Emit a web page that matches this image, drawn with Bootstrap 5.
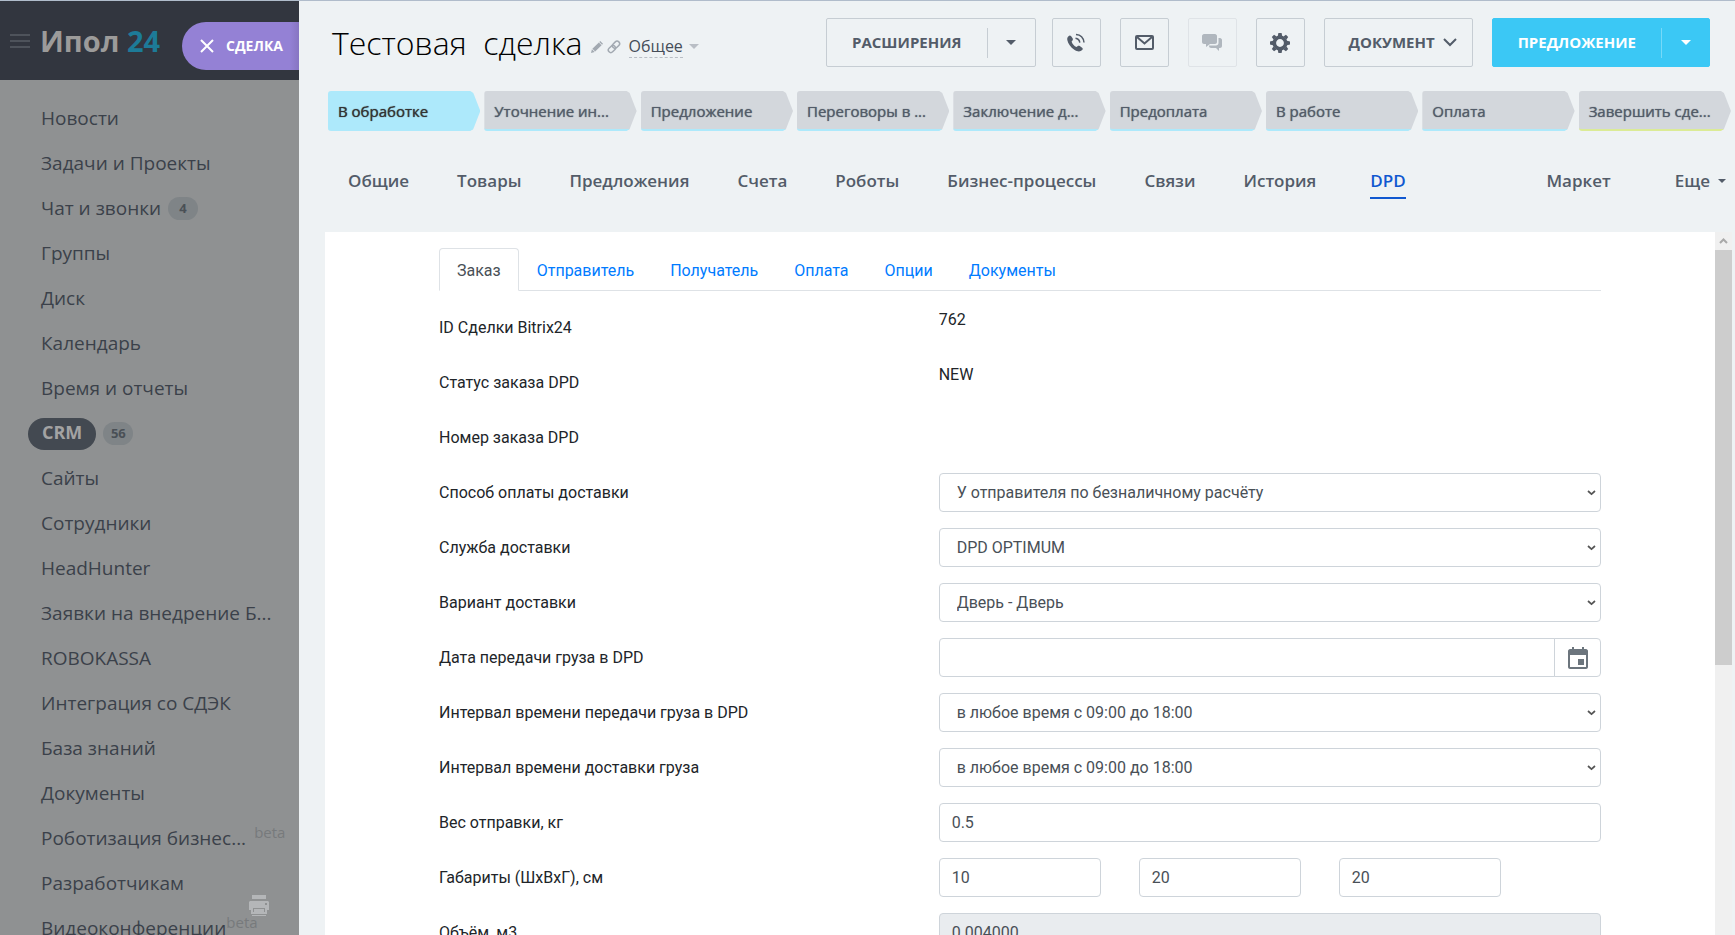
<!DOCTYPE html>
<html lang="ru">
<head>
<meta charset="utf-8">
<meta name="viewport" content="width=device-width, initial-scale=1">
<title>Тестовая сделка</title>
<link href="https://cdn.jsdelivr.net/npm/bootstrap@5.3.0/dist/css/bootstrap.min.css" rel="stylesheet">
<style>
body { font-family: "Open Sans", sans-serif; background: #eef2f4; color: #525c69; }
a { text-decoration: none; color: inherit; }
.app { height: 100vh; border-top: 1px solid #b0bccb; }

/* left menu */
.side { width: 299px; background: #8f9192; }
.side-head { height: 79px; background: #32363f; padding-left: 10px; }
.brand { font-size: 29px; line-height: 40px; font-weight: 700; color: #9c9b9a; margin-left: 10px; }
.brand span { color: #1d7b98; }
.burger { width: 20px; height: 17px; border: 0; padding: 0; background: none; margin-top: 1px; }
.slider-label { width: 117px; height: 48px; border: 0; border-radius: 24px 0 0 24px; background: linear-gradient(90deg, #9481d5 92%, #8775c2); color: #fff; font-size: 14px; font-weight: 700; padding: 0 0 0 18px; gap: 12px; margin-top: 10px; }
.menu { padding: 16px 0 0 41px; }
.menu li { height: 45px; font-size: 19px; color: #3b414a; white-space: nowrap; }
.pill { height: 23px; width: 30px; border-radius: 12px; background: #7f8487; color: #4a5056; font-size: 13px; font-weight: 700; margin-left: 7px; }
.menu .current { height: 32px; border-radius: 16px; background: #434951; color: #a3a3a3; font-size: 18px; font-weight: 700; line-height: 28px; padding: 0 14px; margin-left: -13px; }
.beta { font-size: 15px; color: #777a7c; margin-bottom: 12px; }
.print { right: 30px; bottom: 18px; border: 0; padding: 0; background: none; line-height: 0; }

/* deal header */
.deal-head { padding: 17px 25px 0 33px; }
.deal-title { font-size: 32px; line-height: 48px; font-weight: 300; color: #000; margin: 0; }
.icon-plain { border: 0; padding: 0; background: none; line-height: 0; }
.category { font-size: 16px; line-height: 22px; color: #454d58; border: 0; border-bottom: 1px dashed #b9bec5; padding: 0; background: none; margin-left: 8px; }
.tri { width: 0; height: 0; border: 5px solid transparent; border-top-color: currentColor; border-bottom: 0; }
.tri-pale { color: #b9bec5; margin-left: 6px; }
.tool { height: 49px; border: 1px solid #c6cdd3; border-radius: 2px; color: #535c69; background: none; font-size: 15px; font-weight: 700; padding: 0; display: flex; align-items: center; justify-content: center; }
.tool-square { width: 49px; }
.tool-square + .tool, .tool + .tool-split { margin-left: 19px; }
.tool:disabled { border-color: #dfe3e7; background: none; opacity: 1; }
.doc { padding: 0 15px 0 24px; }
.tool-split { padding-left: 25px; }
.tool-split .drop { border: 0; border-left: 1px solid #c6cdd3; background: none; color: inherit; height: 30px; width: 48px; padding: 0; display: flex; justify-content: center; align-items: center; }
.tool-split .act { border: 0; background: none; color: inherit; font-weight: inherit; padding: 0; margin-right: 25px; }
.tool-blue { background: #3bc8f5; border-color: #3bc8f5; color: #fff; }
.tool-blue .drop { border-left-color: #76d9f8; }

/* stage chevrons */
.stages { padding: 24px 4px 0 29px; gap: 4px; }
.stage { flex: 1 1 0; min-width: 0; height: 40px; border: 0; border-radius: 3px 0 0 3px; border-bottom: 2px solid #ade9fb; background: #d3d7dc; color: #535c69; font-size: 15px; text-align: left; padding: 2px 6px 0 10px; white-space: nowrap; overflow: hidden; text-shadow: 0 0 1px currentColor; line-height: 36px;
  clip-path: polygon(0 0, calc(100% - 10px) 0, calc(100% - 7px) 2px, 100% 50%, calc(100% - 7px) calc(100% - 2px), calc(100% - 10px) 100%, 0 100%); }
.stage.now { background: #ade9fb; color: #333; }
.stage.final { border-bottom-color: #dbeb96; }

/* section links */
.sections { padding: 38px 9px 0 49px; gap: 48px; font-size: 17px; line-height: 24px; font-weight: 600; }
.sections a { color: #535c69; padding-bottom: 4px; border-bottom: 2px solid transparent; white-space: nowrap; }
.sections .chosen { color: #1058d0; border-color: #1058d0; margin-left: 6px; }

/* order form */
.sheet { margin: 33px 3px 0 26px; background: #fff; min-height: 0; font-family: Roboto, sans-serif; font-size: 16px; color: #212529; }
.sheet-body { padding: 16px 114px 0; min-width: 0; }
.nav-tabs { --bs-nav-tabs-link-active-color: #495057; --bs-nav-link-color: #007bff; --bs-nav-tabs-border-radius: 4px; margin-bottom: 17px; }
.nav-tabs .nav-link { padding: 9px 17px 7px; line-height: 25px; }
.line { min-height: 39px; margin-bottom: 16px; }
.line-name { flex: 0 0 43%; line-height: 24px; padding-top: 8px; }
.form-control, .form-select { height: 39px; font-size: 16px; line-height: 24px; color: #495057; border-color: #ced4da; border-radius: 4px; }
.form-control { padding: 6px 12px; }
.form-select { padding: 6px 30px 6px 17px; background-size: 9px 6px; background-position: right 4px center;
  background-image: url("data:image/svg+xml,%3csvg xmlns='http://www.w3.org/2000/svg' viewBox='0 0 9 6'%3e%3cpath d='M1 1l3.500 3.200L8 1' fill='none' stroke='%23555' stroke-width='1.700'/%3e%3c/svg%3e"); }
.form-control:disabled { background: #e9ecef; }
.date-btn { width: 47px; flex: none; border: 1px solid #ced4da; border-radius: 4px; background: #fff; padding: 0; }
.sizes { gap: 38px; }
.sizes .form-control { width: 162px; }
.rail { width: 17px; background: #f0f0f0; }
.rail-up { height: 18px; }
.rail-thumb { height: 59%; background: #cdcdcd; }
</style>
</head>
<body class="overflow-hidden">
<div class="app d-flex overflow-hidden">

  <aside class="side flex-shrink-0 position-relative overflow-hidden">
    <div class="side-head d-flex align-items-center">
      <button class="burger d-flex" type="button" aria-label="Меню"><svg width="20" height="17" stroke="#4e535b" stroke-width="2"><path d="M0 2h20M0 8h20M0 14h20"/></svg></button>
      <a class="brand text-nowrap" href="#">Ипол <span>24</span></a>
      <button class="slider-label d-flex align-items-center ms-auto flex-shrink-0" type="button"><svg width="14" height="14" stroke="#fff" stroke-width="2"><path d="M1 1l12 12M13 1L1 13"/></svg>СДЕЛКА</button>
    </div>
    <ul class="menu list-unstyled mb-0">
      <li class="d-flex align-items-center"><a href="#">Новости</a></li>
      <li class="d-flex align-items-center"><a href="#">Задачи и Проекты</a></li>
      <li class="d-flex align-items-center"><a href="#">Чат и звонки</a><span class="pill d-flex align-items-center justify-content-center">4</span></li>
      <li class="d-flex align-items-center"><a href="#">Группы</a></li>
      <li class="d-flex align-items-center"><a href="#">Диск</a></li>
      <li class="d-flex align-items-center"><a href="#">Календарь</a></li>
      <li class="d-flex align-items-center"><a href="#">Время и отчеты</a></li>
      <li class="d-flex align-items-center"><a class="current" href="#">CRM</a><span class="pill d-flex align-items-center justify-content-center">56</span></li>
      <li class="d-flex align-items-center"><a href="#">Сайты</a></li>
      <li class="d-flex align-items-center"><a href="#">Сотрудники</a></li>
      <li class="d-flex align-items-center"><a href="#">HeadHunter</a></li>
      <li class="d-flex align-items-center"><a href="#">Заявки на внедрение Б...</a></li>
      <li class="d-flex align-items-center"><a href="#">ROBOKASSA</a></li>
      <li class="d-flex align-items-center"><a href="#">Интеграция со СДЭК</a></li>
      <li class="d-flex align-items-center"><a href="#">База знаний</a></li>
      <li class="d-flex align-items-center"><a href="#">Документы</a></li>
      <li class="d-flex align-items-center"><a href="#">Роботизация бизнес...</a><span class="beta ms-2">beta</span></li>
      <li class="d-flex align-items-center"><a href="#">Разработчикам</a></li>
      <li class="d-flex align-items-center"><a href="#">Видеоконференции</a><span class="beta">beta</span></li>
    </ul>
    <button class="print position-absolute" type="button" aria-label="Печать"><svg width="20" height="22" fill="#b4b6b8"><path d="M3 0h14v4H3z"/><path d="M1 6h18l1 1v8h-2v4H2v-4H0V7z"/><path d="M4 13h12v4H4z" fill="#8f9192"/><path d="M5 14h10v3H5zM3 20h14v1H3z"/><path d="M16 8h2v2h-2z" fill="#8f9192"/></svg></button>
  </aside>

  <main class="flex-grow-1 d-flex flex-column overflow-hidden">
    <header class="deal-head d-flex align-items-center">
      <h1 class="deal-title text-nowrap">Тестовая&nbsp; сделка</h1>
      <button class="icon-plain ms-2 mt-2" type="button" aria-label="Изменить"><svg width="12" height="12" viewBox="0 0 13 13" fill="#a2a9b1"><path d="M0 13l1-4 3 3zM1.500 8.500l7-7 3 3-7 7zM9 1l1-1 3 3-1 1z"/></svg></button>
      <button class="icon-plain ms-1 mt-2" type="button" aria-label="Ссылка"><svg width="14" height="14" fill="none" stroke="#a2a9b1" stroke-width="1.500"><rect x="-4" y="-2.500" width="8" height="5" rx="2.500" transform="translate(9 4.700) rotate(-45)"/><rect x="-4" y="-2.500" width="8" height="5" rx="2.500" transform="translate(4.900 9) rotate(-45)"/></svg></button>
      <button class="category mt-2" type="button">Общее</button>
      <span class="tri tri-pale mt-2"></span>

      <div class="d-flex ms-auto">
        <div class="tool tool-split"><button class="act" type="button">РАСШИРЕНИЯ</button><button class="drop" type="button" aria-label="Ещё расширения"><span class="tri"></span></button></div>
        <button class="tool tool-square ms-3" type="button" aria-label="Позвонить"><svg width="18" height="20" fill="#535c69"><path transform="translate(0 2.500)" d="M1.500.7C2.300-.2 3.300-.2 4 .5L5.600 2.800C6.200 3.700 5.900 4.600 5.300 5.200L4.600 6C5.100 8.200 7.300 10.800 9.500 11.600L10.500 10.700C11.200 10.100 12.100 10.100 12.800 10.600L15.100 12.300C16 13 15.900 13.900 15.200 14.600C13.200 16.600 10.300 16.300 7.300 14.300C3.600 11.700 1 8 .3 4.500C0 2.800.5 1.600 1.500.7z"/><path d="M8.500 5.200c2.300.3 4 2 4.300 4.500M9 1.500c4.500.3 7.500 3.500 8 8" fill="none" stroke="#535c69" stroke-width="1.500"/></svg></button>
        <button class="tool tool-square" type="button" aria-label="Написать письмо"><svg width="19" height="15" fill="none" stroke="#535c69" stroke-width="2"><rect x="1" y="1" width="17" height="13" rx="1"/><path d="M2 2l7.500 6.500L17 2"/></svg></button>
        <button class="tool tool-square" type="button" aria-label="Чат" disabled><svg width="20" height="18" fill="#b0b7be"><path d="M2 0h11c1 0 2 1 2 2v6c0 1-1 2-2 2H8l-4 3v-3H2c-1 0-2-1-2-2V2c0-1 1-2 2-2z"/><path d="M16.500 4H18c1 0 2 1 2 2v6c0 1-1 2-2 2h-1v3l-3-3H9c-1 0-2-1-2-2v-.500h7c1.500 0 2.500-1 2.500-2.500z"/></svg></button>
        <button class="tool tool-square" type="button" aria-label="Настройки"><svg width="20" height="20" viewBox="-10 -10 20 20" fill="#535c69"><circle r="5.700" fill="none" stroke="#535c69" stroke-width="3.600"/><path id="t" d="M-2.200-7l.6-3h3.200l.6 3zM-2.200 7l.6 3h3.200l.6-3z"/><use href="#t" transform="rotate(45)"/><use href="#t" transform="rotate(90)"/><use href="#t" transform="rotate(135)"/></svg></button>
        <button class="tool doc" type="button">ДОКУМЕНТ<svg class="ms-2" width="14" height="9" fill="none" stroke="#535c69" stroke-width="2"><path d="M1 1l6 6 6-6"/></svg></button>
        <div class="tool tool-split tool-blue"><button class="act" type="button">ПРЕДЛОЖЕНИЕ</button><button class="drop" type="button" aria-label="Другие документы"><span class="tri"></span></button></div>
      </div>
    </header>

    <div class="stages d-flex">
      <button class="stage now" type="button">В обработке</button>
      <button class="stage" type="button">Уточнение ин...</button>
      <button class="stage" type="button">Предложение</button>
      <button class="stage" type="button">Переговоры в ...</button>
      <button class="stage" type="button">Заключение д...</button>
      <button class="stage" type="button">Предоплата</button>
      <button class="stage" type="button">В работе</button>
      <button class="stage" type="button">Оплата</button>
      <button class="stage final" type="button">Завершить сде...</button>
    </div>

    <nav class="sections d-flex">
      <a href="#">Общие</a>
      <a href="#">Товары</a>
      <a href="#">Предложения</a>
      <a href="#">Счета</a>
      <a href="#">Роботы</a>
      <a href="#">Бизнес-процессы</a>
      <a href="#">Связи</a>
      <a href="#">История</a>
      <a class="chosen" href="#">DPD</a>
      <a class="ms-auto me-3" href="#">Маркет</a>
      <a class="d-flex align-items-center" href="#">Еще<svg class="ms-2" width="8" height="4" fill="#535c69"><path d="M0 0h8L4 4z"/></svg></a>
    </nav>

    <section class="sheet flex-grow-1 d-flex overflow-hidden">
      <form class="sheet-body flex-grow-1">
        <ul class="nav nav-tabs">
          <li class="nav-item"><a class="nav-link active" href="#">Заказ</a></li>
          <li class="nav-item"><a class="nav-link" href="#">Отправитель</a></li>
          <li class="nav-item"><a class="nav-link" href="#">Получатель</a></li>
          <li class="nav-item"><a class="nav-link" href="#">Оплата</a></li>
          <li class="nav-item"><a class="nav-link" href="#">Опции</a></li>
          <li class="nav-item"><a class="nav-link" href="#">Документы</a></li>
        </ul>
        <div class="line d-flex"><span class="line-name">ID Сделки Bitrix24</span><span>762</span></div>
        <div class="line d-flex"><span class="line-name">Статус заказа DPD</span><span>NEW</span></div>
        <div class="line d-flex"><span class="line-name">Номер заказа DPD</span></div>
        <div class="line d-flex"><label class="line-name" for="pay">Способ оплаты доставки</label><select class="form-select" id="pay"><option>У отправителя по безналичному расчёту</option></select></div>
        <div class="line d-flex"><label class="line-name" for="service">Служба доставки</label><select class="form-select" id="service"><option>DPD OPTIMUM</option></select></div>
        <div class="line d-flex"><label class="line-name" for="variant">Вариант доставки</label><select class="form-select" id="variant"><option>Дверь - Дверь</option></select></div>
        <div class="line d-flex"><label class="line-name" for="date">Дата передачи груза в DPD</label>
          <div class="input-group flex-nowrap"><input class="form-control" id="date" type="text"><button class="date-btn" type="button" aria-label="Выбрать дату"><svg width="20" height="22" fill="#6c757d"><path d="M4 0h2v2h8V0h2v2h2c1 0 2 1 2 2v16c0 1-1 2-2 2H2c-1 0-2-1-2-2V4c0-1 1-2 2-2h2zM2 8v12h16V8z" fill-rule="evenodd"/><path d="M10 12h6v6h-6z"/></svg></button></div></div>
        <div class="line d-flex"><label class="line-name" for="pickup">Интервал времени передачи груза в DPD</label><select class="form-select" id="pickup"><option>в любое время с 09:00 до 18:00</option></select></div>
        <div class="line d-flex"><label class="line-name" for="delivery">Интервал времени доставки груза</label><select class="form-select" id="delivery"><option>в любое время с 09:00 до 18:00</option></select></div>
        <div class="line d-flex"><label class="line-name" for="weight">Вес отправки, кг</label><input class="form-control" id="weight" type="text" value="0.5"></div>
        <div class="line d-flex"><label class="line-name" for="w">Габариты (ШхВхГ), см</label>
          <div class="sizes d-flex"><input class="form-control" id="w" type="text" value="10"><input class="form-control" type="text" value="20" aria-label="Высота"><input class="form-control" type="text" value="20" aria-label="Глубина"></div></div>
        <div class="line d-flex"><label class="line-name" for="volume">Объём, м3</label><input class="form-control" id="volume" type="text" value="0.004000" disabled></div>
      </form>
      <div class="rail flex-shrink-0" aria-hidden="true">
        <div class="rail-up d-flex align-items-center justify-content-center"><svg width="9" height="6" fill="none" stroke="#a9a9a9" stroke-width="2"><path d="M1 5l3.500-3.500L8 5"/></svg></div>
        <div class="rail-thumb"></div>
      </div>
    </section>
  </main>
</div>
<script src="https://cdn.jsdelivr.net/npm/bootstrap@5.3.0/dist/js/bootstrap.bundle.min.js"></script>
</body>
</html>
